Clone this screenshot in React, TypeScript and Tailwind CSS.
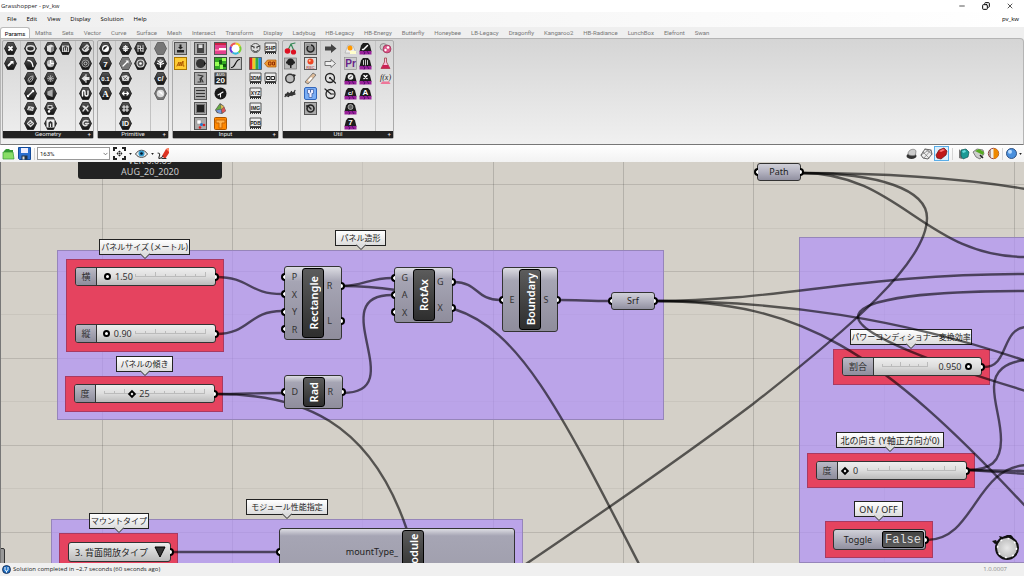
import type { ReactNode } from "react";
import clsx from "clsx";
import { Copy, Minus, X } from "lucide-react";

type Icon = { label: string; frame: "hex" | "pale" | "box" | "file" | "cap" | "none"; art: ReactNode };

const stroke = (d: string, color = "#fff", width = 1.4) => (
  <path d={d} fill="none" stroke={color} strokeWidth={width} strokeLinecap="round" strokeLinejoin="round" />
);

const letter = (text: string, size: number, color = "#fff", y = 10.5) => (
  <text x="7.5" y={y} textAnchor="middle" fontSize={size} fontWeight="bold" fill={color} fontFamily="Liberation Sans, sans-serif">
    {text}
  </text>
);

const hex = (label: string, art: ReactNode): Icon => ({ label, frame: "hex", art });
const box = (label: string, art: ReactNode): Icon => ({ label, frame: "box", art });
const file = (label: string, art: ReactNode): Icon => ({ label, frame: "file", art });
const cap = (label: string, art: ReactNode): Icon => ({ label, frame: "cap", art });
const plain = (label: string, art: ReactNode): Icon => ({ label, frame: "none", art });

const hexPoints = "4.5,1.5 10.5,1.5 13.5,7.5 10.5,13.5 4.5,13.5 1.5,7.5";

const groups: { name: string; sections: Icon[][][] }[] = [
  {
    name: "Geometry",
    sections: [
      [[
        hex("Point", stroke("M6 6l3 3M9 6l-3 3", "#fff", 1.8)),
        hex("Vector", <>{stroke("M5.5 9.5l3-3", "#fff", 1.8)}<path d="M7 5h3.500v3.500z" fill="#fff" /></>),
      ]],
      [[
        hex("Circle", <ellipse cx="7.500" cy="7.500" rx="4" ry="2.700" fill="none" stroke="#ddd" strokeWidth="1.500" />),
        hex("Circular Arc", stroke("M5 4.500c3 0 4.500 2 5 6")),
        hex("Curve", stroke("M5 10c0-3 2-5 5-5M6 11c3 0 4-2 4-5M6.500 9.500l2.500-3", "#ccc", 0.9)),
        hex("Line", <>{stroke("M5 10l5-5")}<circle cx="5" cy="10" r="1.200" fill="#fff" /><circle cx="10" cy="5" r="1.200" fill="#fff" /></>),
        hex("Plane", <><path d="M4 9l1.500-4 5.500 1-1 4z" fill="#ddd" />{stroke("M6 8.500l1.500-2 1.500 2", "#555", 0.7)}</>),
        hex("Rectangle", stroke("M7.500 4.500l3 3-3 3-3-3zM6 8.500l3-2", "#ddd", 1.2)),
      ]],
      [
        [
          hex("Box", <><path d="M4 5l4-1.500 3 1.500v4.500l-3.500 2L4 10z" fill="#ddd" /><path d="M8 6.500l3-1.500v4.500l-3 2z" fill="#888" /></>),
          hex("Brep", <><circle cx="7.500" cy="7.500" r="3.700" fill="#bbb" /><path d="M7.500 4v3.500h3.500M5 9h3" stroke="#fff" fill="none" /></>),
          hex("Mesh", <><circle cx="7.500" cy="7.500" r="3.500" fill="#555" />{stroke("M4.500 7.500h6M7.500 4.500v6M5.500 5.500l4 4M9.500 5.500l-4 4", "#bbb", 0.7)}</>),
          hex("Surface", <><path d="M4.500 5.500l5-2v7.500l-5-2z" fill="#ccc" />{stroke("M6 5v4M8 4.500v6", "#666", 0.6)}</>),
          hex("SubD", <>{stroke("M5 4.500h4v3h-4zM6 9.500l4-3", "#ccc", 1.1)}<circle cx="6" cy="10.500" r="1.200" fill="#fff" /></>),
          hex("Twisted Box", <><path d="M3.500 3.500h8v8h-8z" fill="#eee" /><path d="M5.500 11V6.500l2-1.500 2 1.500V11h-1.500V7.500H7V11z" fill="#333" /></>),
        ],
        [hex("Field", <><path d="M4 4.500h7v6.500H4z" fill="#ccc" />{stroke("M5.500 10V6.500l2-1 2 1V10M7.500 6v3", "#333", 0.9)}</>)],
      ],
      [[
        hex("Geometry", <>{stroke("M4.500 8c1 3 4 3 6 0M6 7l3-3 1.500 1.500L7.500 9", "#ddd", 1.5)}</>),
        hex("Geometry Cache", <><circle cx="7.500" cy="7.500" r="3.500" fill="none" stroke="#999" /><circle cx="7.500" cy="7.500" r="1.500" fill="none" stroke="#ccc" /></>),
        hex("Transform", <><path d="M7.500 4v2h4v3h-4v2L3.500 7.500z" fill="#ddd" />{stroke("M8 3.500v8", "#fff", 0.9)}</>),
        hex("Geometry Pipeline", stroke("M4.500 10V6c0-2 2.500-2 2.500 0v2.500c0 2 3 2 3 0V5")),
        hex("Group", stroke("M5 5l2 2.500-2 2.500M10 5L8 7.500l2 2.500M6.500 5.500l3 4", "#ddd", 1.3)),
        hex("Deform", stroke("M10 5c-3-1.500-5.500.500-5 3 .500 2 3 2 4 1M7.500 7.500h3", "#ddd", 1.6)),
      ]],
    ],
  },
  {
    name: "Primitive",
    sections: [
      [[
        hex("Boolean", <><circle cx="7.500" cy="7.500" r="3.500" fill="#fff" /><path d="M5.500 9.500a3 3 0 0 1 4-4z" fill="#222" /></>),
        hex("Integer", letter("7", 8)),
        hex("Number", letter("0.1", 6, "#fff", 9.5)),
        hex("Text", <text x="7.500" y="10.500" textAnchor="middle" fontSize="9" fontWeight="bold" fill="#fff" fontFamily="Liberation Serif, serif">A</text>),
      ]],
      [
        [
          hex("Complex", stroke("M5 7.500h5.500M7.500 4.500v6M6 5.500h3v4H6z", "#eee", 1.2)),
          hex("Colour", <><polygon points={hexPoints} fill="#777" />{stroke("M5 10l4-4", "#fff", 1.2)}<path d="M7.500 4.500h3v3z" fill="#fff" /></>),
          hex("Culture", <><path d="M3.500 5l5-1 3 2-1 4-6 0z" fill="#ddd" />{stroke("M5 6l4 3M6 9l3-3", "#555", 0.8)}</>),
          hex("Domain", stroke("M4.500 7.500h6M6 6l-1.500 1.500L6 9M9 6l1.500 1.500L9 9", "#fff", 1.2)),
          hex("Domain 2", stroke("M4.500 6h6M4.500 9h6M6 4.500v6M9 4.500v6", "#eee", 1.1)),
          hex("Guid", letter("ID", 7, "#fff", 10)),
        ],
        [
          hex("Matrix", stroke("M5 4.500v6M7.500 5v5M10 4.500v6M5 7.500h5M5 5h1.500M10 10h-1.500", "#ccc", 1)),
          hex("Time", <><circle cx="7.500" cy="7.500" r="3.500" fill="#555" stroke="#ddd" strokeWidth="1.200" /><circle cx="7.500" cy="7.500" r="1.300" fill="#fff" /></>),
        ],
      ],
      [[
        { label: "Data", frame: "pale", art: null },
        hex("Data Path", <>{stroke("M7.500 11V7M5 5l2.500 2L10 5M4.500 7.500l3 1 3-1", "#fff", 1.3)}<circle cx="7.500" cy="4.500" r="1.300" fill="#ccc" /></>),
        hex("File Path", letter("c/", 7, "#fff", 9.5)),
        { label: "Shader", frame: "pale", art: <><circle cx="7.500" cy="7.500" r="3.800" fill="#ddd" /><path d="M5 5.500a4 4 0 0 1 5 4z" fill="#fff" /></> },
      ]],
    ],
  },
  {
    name: "Input",
    sections: [
      [[
        box("Button", <><path d="M4 9h7v2.500H4z" fill="#222" /><path d="M6.500 3.500h2V6H10L7.500 8.500 5 6h1.500z" fill="#222" /></>),
        plain("Panel", <><rect x="1.500" y="1.500" width="12" height="12" fill="#fc3" stroke="#a70" />{stroke("M4 10l2-4v4l2-4v4l2-5v5h1", "#a50", 1)}</>),
      ]],
      [[
        box("Boolean Toggle", <><path d="M4 3h7v9H4z" fill="#444" /><path d="M5.500 3.500h4V7h-4z" fill="#ddd" /></>),
        box("Control Knob", <><circle cx="7.500" cy="7.500" r="4.500" fill="#333" /><path d="M11 5l2 2.500L11 10z" fill="#111" /></>),
        box("Digit Scroller", stroke("M5 4l5 1-3 3 1 3H5M8 7l2 4", "#333", 1.2)),
        box("MD Slider", stroke("M3.500 4.500h8M3.500 7.500h8M3.500 10.500h8", "#333", 1.2)),
        box("Number Slider", <rect x="3.500" y="3.500" width="8" height="8" fill="#222" stroke="#777" />),
        box("Value List", <><path d="M4 4h4v4H4z" fill="#fff" stroke="#888" strokeWidth=".5" /><circle cx="8.500" cy="8.500" r="1.500" fill="#27c" /><circle cx="11" cy="9" r="1.300" fill="#d22" /><circle cx="7" cy="11.500" r="1.300" fill="#d22" /></>),
      ]],
      [
        [
          box("Colour Picker", <><rect x="2" y="2" width="11" height="11" fill="#e3418d" /><path d="M2 8h11v2H2z" fill="#f7a" /><rect x="6" y="7" width="7" height="2" fill="#fff" /><path d="M2 2h11v2H2z" fill="#c24" /></>),
          plain("Image Sampler", <><rect x="1.500" y="1.500" width="12" height="12" fill="#3a2" stroke="#353" /><path d="M2 6h4v4H2zM9 2h4v3H9zM7 9h3v4H7z" fill="#9f5" /><path d="M6 4h3v4H6zM10 8h3v3h-3z" fill="#151" /></>),
          plain("Calendar", <><rect x="1.500" y="1.500" width="12" height="12" fill="#222" /><path d="M2 2h11v3.500H2z" fill="#555" />{letter("AUG", 4, "#ddd", 5)}{letter("20", 8, "#fff", 12)}</>),
          plain("Clock", <><circle cx="7.500" cy="7.500" r="6" fill="#1a1a1a" />{stroke("M5 9l2.500-1.500L10 6M7.500 7.500V11", "#fff", 1.1)}</>),
          plain("Gradient Mesh", <><path d="M2 9l5-7 4 3 2 5-4 3-5-1z" fill="#555" /><path d="M2.500 9l4.500-6 1 5z" fill="#6a4" /><path d="M7.500 3.500L11 5.500l-2.500 3z" fill="#db5" /><path d="M11 6l1.500 4-3 2-1-3z" fill="#d55" /><path d="M3 9.500l5-1 .500 4-3.500-1z" fill="#79d" /></>),
          plain("Import Table", <><rect x="1.500" y="1.500" width="12" height="12" rx="1" fill="#f80" stroke="#a50" /><path d="M3 4h9v3H9v5H6V7H3z" fill="#ffb24d" stroke="#c60" /></>),
        ],
        [
          plain("Colour Wheel", <><circle cx="7.500" cy="7.500" r="4.500" fill="#fff" /><g fill="none" strokeWidth="2"><path d="M7.500 2.500a5 5 0 0 1 4.500 3" stroke="#ec2" /><path d="M12 5.500a5 5 0 0 1-1.500 6" stroke="#7c3" /><path d="M10.500 11.500a5 5 0 0 1-6 0" stroke="#3bd" /><path d="M4.500 11.500a5 5 0 0 1-1.500-6" stroke="#63d" /><path d="M3 5.500a5 5 0 0 1 4.500-3" stroke="#e55" /></g></>),
          box("Graph Mapper", <><path d="M2.500 2.500h10v10h-10z" fill="#ccc" />{stroke("M3.500 11.500c4 0 4-8 8-8", "#111", 1.2)}</>),
        ],
      ],
      [
        [
          plain("Object Details", <><circle cx="7.500" cy="7" r="4.500" fill="#ddd" stroke="#555" />{stroke("M3 5l3 1M12 5L9 6M5 9.500c2 1.500 3 1.500 5 0M6 6v1M9 6v1", "#333", 1)}</>),
          plain("Colour Swatch", <g><path d="M1.500 1.500h3v12h-3z" fill="#d22" /><path d="M4.500 1.500h3v12h-3z" fill="#ec2" /><path d="M7.500 1.500h3v12h-3z" fill="#3a4" /><path d="M10.500 1.500h3v12h-3z" fill="#28d" /><path d="M1.500 1.500h12v12h-12z" fill="none" stroke="#333" strokeWidth=".6" /></g>),
          file("3DM File", letter("3DM", 5, "#222", 8.5)),
          file("XYZ File", letter("XYZ", 5, "#222", 8.5)),
          file("Image File", letter("IMG", 5, "#222", 8.5)),
          file("PDB File", letter("PDB", 5, "#222", 8.5)),
        ],
        [
          file("Shape File", letter("SHP", 5, "#222", 8.5)),
          plain("Atom Data", <><path d="M1.500 7.500l3-3.500h8.500v7H4.500z" fill="#e93" stroke="#a50" strokeWidth=".7" />{stroke("M6 6h2v3H6zM10 6h1.500v3H10z", "#820", 0.9)}</>),
          file("File Reader", stroke("M4 5.500h3v3H4zM8.500 5.500h3v3h-3z", "#222", 1)),
        ],
      ],
    ],
  },
  {
    name: "Util",
    sections: [
      [[
        plain("Cherry Picker", <>{stroke("M5 9l3-6 3 7M8 3l4-1", "#385", 1.2)}<circle cx="4.500" cy="10" r="2.800" fill="#d12" /><circle cx="10.500" cy="11" r="2.600" fill="#d12" /></>),
        plain("Param Viewer", <><rect x="1.500" y="2" width="12" height="11" fill="#bbb" stroke="#666" strokeWidth=".6" /><circle cx="7.500" cy="6" r="3.500" fill="#222" /><path d="M3 5.500h9v2H3zM7 8h1.500v4H7z" fill="#222" /></>),
        plain("Cluster Output", <><circle cx="7" cy="7.500" r="4.300" fill="#bbb" stroke="#333" strokeWidth="1.400" /><path d="M10 3l3 1-2 2z" fill="#222" /></>),
        plain("Scribble", stroke("M2 10.500l3-4 .500 4 3-5 .500 4 3-5M2.500 8.500l9-2M4 10l8-2", "#333", 1.3)),
      ]],
      [[
        box("Data Dam", <><circle cx="7.500" cy="7.500" r="3.500" fill="#888" stroke="#222" strokeWidth="1.500" /><path d="M3 3h5v2H3z" fill="#999" /></>),
        box("Data Recorder", <><rect x="2" y="2" width="11" height="11" fill="#ddd" /><circle cx="7.500" cy="5.500" r="3" fill="#e42" /><circle cx="6.700" cy="4.700" r="1" fill="#fc9" />{letter("REC", 4, "#b66", 12.5)}</>),
        plain("Relay", <><path d="M2 11l8-9 3 2-8 9z" fill="#db9" stroke="#666" strokeWidth=".8" /><path d="M5 9l3-3 1.500 1L6 11z" fill="#fff" /></>),
        plain("Trigger", <><rect x="1.500" y="1.500" width="12" height="12" rx="1.500" fill="#7aaef5" stroke="#36b" /><path d="M4.500 3.500h6v4H9v4H6v-4H4.500z" fill="#eef" stroke="#46a" strokeWidth=".8" /><path d="M7.500 3.500v3" stroke="#46a" /></>),
        box("Timer", <><circle cx="7.500" cy="7.500" r="3.500" fill="none" stroke="#222" strokeWidth="1.600" />{stroke("M5 5l3 3M3.500 5h2", "#222", 1.4)}</>),
      ]],
      [[
        plain("Input Arrow", <path d="M2 5.500h6V3l5.500 4.500L8 12V9.500H2z" fill="#444" />),
        plain("Output Arrow", <path d="M2 5.500h6V3.500l4.500 4L8 11.500V9.500H2z" fill="#eee" stroke="#555" strokeWidth=".8" />),
        plain("Find", <><circle cx="7" cy="7" r="4.500" fill="none" stroke="#222" strokeWidth="1.300" />{stroke("M7 7l5.500 5", "#222", 1.2)}<circle cx="7" cy="7" r="1" fill="#222" /></>),
        plain("Jump", <><circle cx="7.500" cy="8" r="4.500" fill="none" stroke="#222" strokeWidth="1.300" />{stroke("M2 3l6 5M8 8h2.500", "#222", 1.2)}</>),
      ]],
      [
        [
          plain("Fitness Landscape", <><path d="M2 12l3-8 5 1 3 7z" fill="#eee" stroke="#999" strokeWidth=".5" /><circle cx="7" cy="7" r="2.500" fill="#f90" /><path d="M7 10h6v3H7z" fill="#ffc" /></>),
          plain("Primitive", <><rect x="1.500" y="1.500" width="12" height="12" fill="#ccc" stroke="#888" strokeWidth=".6" />{letter("Pr", 10, "#628", 11)}</>),
          cap("Gauge", <><circle cx="7.500" cy="6" r="2.800" fill="#eee" />{stroke("M6.500 7l2-2", "#222", 1)}</>),
          cap("Path Genes", letter("c/", 6, "#fff", 8.5)),
          cap("Mesh Genes", <circle cx="7.500" cy="6" r="2.500" fill="#666" stroke="#ccc" strokeWidth=".7" />),
          cap("Integer Genes", letter("7", 8, "#fff", 9)),
        ],
        [
          cap("Line Genes", stroke("M6 8l3.500-3.500M4.500 8.500h1", "#fff", 1.5)),
          cap("List Genes", stroke("M5.500 4.500v4M7.500 4v5M9.500 4.500v4", "#ccc", 1)),
          cap("Point Genes", stroke("M6 4.500l3 3M9 4.500l-3 3", "#fff", 1.5)),
          cap("Text Genes", letter("A", 8, "#fff", 9)),
        ],
      ],
      [[
        plain("Galapagos", <><circle cx="5.500" cy="6" r="3.500" fill="#ccc" stroke="#666" strokeWidth=".6" /><circle cx="9" cy="8" r="4" fill="#d58" stroke="#824" strokeWidth=".6" /><circle cx="10" cy="6.500" r="1.300" fill="#fff" /><circle cx="7.500" cy="9" r="1.200" fill="#fff" /></>),
        plain("Solver", <><path d="M6.500 2h2v4l3.500 6.500H3L6.500 6z" fill="#fbd" stroke="#944" strokeWidth=".8" /><path d="M5 9h5l2 3.500H3z" fill="#c25" /></>),
        plain("Expression", <><text x="7.500" y="8.500" textAnchor="middle" fontSize="8" fontStyle="italic" fontFamily="Liberation Serif, serif" fill="#222">f(x)</text><path d="M4 10.500h7l1.500 2.500h-10z" fill="#e79" /></>),
      ]],
    ],
  },
];

const frames: Record<Icon["frame"], ReactNode> = {
  hex: <polygon points={hexPoints} fill="url(#dark)" stroke="#111" strokeWidth=".7" />,
  pale: <polygon points={hexPoints} fill="#777" stroke="#555" strokeWidth=".8" />,
  box: <rect x="1.500" y="1.500" width="12" height="12" fill="#aaa" stroke="#555" />,
  file: (
    <>
      <path d="M2 2h11v8.500H2z" fill="#eee" stroke="#444" strokeWidth=".9" />
      <path d="M2 10.500h11V13H2z" fill="#333" />
      <path d="M3 12.500h9" stroke="#eee" strokeDasharray="1 1" />
    </>
  ),
  cap: (
    <>
      <path d="M1.500 10.500l1.500-6 2-2.500h5l2 2.500 1.500 6z" fill="#1c1c1c" />
      <path d="M1.500 10h12v3.500h-12z" fill="#929" />
      <path d="M5 10l2 1.500-1 2M9 10l2 3" stroke="#406" fill="none" strokeWidth=".8" />
    </>
  ),
  none: null,
};

const menus = ["File", "Edit", "View", "Display", "Solution", "Help"];
const tabs = [
  "Params", "Maths", "Sets", "Vector", "Curve", "Surface", "Mesh", "Intersect", "Transform", "Display", "Ladybug",
  "HB-Legacy", "HB-Energy", "Butterfly", "Honeybee", "LB-Legacy", "Dragonfly", "Kangaroo2", "HB-Radiance",
  "LunchBox", "Elefront", "Swan",
];

function TitleBar() {
  return (
    <header className="flex h-3 shrink-0 items-center justify-between bg-white pl-px pr-[10px] text-[6px]">
      <h1>Grasshopper - pv_kw</h1>
      <div className="flex gap-4 text-black">
        <button aria-label="Minimize"><Minus className="size-2" strokeWidth={2} /></button>
        <button aria-label="Restore"><Copy className="size-2 -scale-x-100" strokeWidth={3} /></button>
        <button aria-label="Close"><X className="size-2" strokeWidth={2} /></button>
      </div>
    </header>
  );
}

function MenuBar() {
  return (
    <nav className="flex h-[15px] shrink-0 items-center bg-linear-to-r from-[#efefef] to-white pl-[7px] pr-[5px] text-[6px] text-black">
      <div className="flex flex-1 gap-[10px]">
        {menus.map((m) => <button key={m}>{m}</button>)}
      </div>
      <span>pv_kw</span>
    </nav>
  );
}

function Ribbon() {
  return (
    <section className="shrink-0 bg-[#efefef]">
      <div role="tablist" className="flex h-[11px] items-stretch font-[Roboto,sans-serif] text-[6px] text-[#777]">
        {tabs.map((t, i) => (
          <button
            key={t + i}
            role="tab"
            aria-selected={i === 0}
            className={clsx(
              "whitespace-nowrap",
              i === 0 ? "w-[30px] rounded-t-[3px] border border-b-0 border-[#bbb] bg-white text-black" : "px-[5px]",
            )}
          >
            {t}
          </button>
        ))}
      </div>
      <div className="flex h-[107px] items-start gap-[3px] rounded-tr-[4px] border border-b-[#777] border-[#b5b5b5] bg-linear-to-b from-[#d5d5d5] to-[#f0f0f0] pl-px pt-px">
        {groups.map((g) => (
          <div key={g.name} className="flex flex-col rounded-[2px] border border-[#aaa] bg-linear-to-b from-[#d5d5d5] to-[#eee]">
            <div className="flex h-[90px] divide-x divide-[#c2c2c2]">
              {g.sections.map((cols, s) => (
                <div key={s} className="flex pr-[2px] not-first:pl-[2px] last:pr-0">
                  {cols.map((col, c) => (
                    <div key={c} className="flex flex-col">
                      {col.map((icon) => (
                        <button key={icon.label} aria-label={icon.label} className="size-[15px]">
                          <svg viewBox="0 0 15 15" className="size-[15px]">
                            {frames[icon.frame]}
                            {icon.art}
                          </svg>
                        </button>
                      ))}
                    </div>
                  ))}
                </div>
              ))}
            </div>
            <div className="relative h-[7px] bg-[#222] text-center font-[Roboto,sans-serif] text-[6px] leading-[6px] text-[#eee]">
              {g.name}
              <span className="absolute right-[2px]">+</span>
            </div>
          </div>
        ))}
      </div>
    </section>
  );
}

function Caret() {
  return <svg viewBox="0 0 4 3" className="h-[2px] w-[3px]"><path d="M0 0h4L2 3z" fill="#222" /></svg>;
}

function Toolbar() {
  return (
    <div className="flex h-[17px] shrink-0 items-center bg-linear-to-b from-white to-[#f2f2f2] px-[2px]">
      <button aria-label="Open">
        <svg viewBox="0 0 13 13" className="size-[13px]">
          <path d="M2 4l2-2h3l1 1h3v8H2z" fill="#393" />
          <path d="M1 5h10l1 7H1z" fill="#8d6" stroke="#393" strokeWidth=".7" />
        </svg>
      </button>
      <button aria-label="Save" className="ml-[3px]">
        <svg viewBox="0 0 13 13" className="size-[13px]">
          <path d="M.5.5h12v12h-11l-1-1z" fill="#2b6fd0" stroke="#124a9a" />
          <path d="M3 1h7v5H3z" fill="#eef" />
          <path d="M3.500 8.500h6v4h-6z" fill="#234" />
          <path d="M4.500 9.500h2v3h-2z" fill="#ddd" />
        </svg>
      </button>
      <span className="ml-[3px] mr-[2px] h-3 w-px bg-[#d5d5d5]" />
      <div className="relative flex">
        <select aria-label="Zoom" className="h-[13px] w-[73px] appearance-none border border-[#999] bg-white pl-[2px] font-[Roboto,sans-serif] text-[6px]">
          <option>163%</option>
        </select>
        <svg viewBox="0 0 6 4" className="pointer-events-none absolute right-[2px] top-[5px] h-[4px] w-[5px]">
          {stroke("M1 1l2 2 2-2", "#555", 0.9)}
        </svg>
      </div>
      <button aria-label="Zoom extents" className="ml-[3px] flex items-center gap-[3px]">
        <svg viewBox="0 0 13 13" className="size-[13px]">
          <path d="M1 4V1h3M9 1h3v3M12 9v3H9M4 12H1V9" fill="none" stroke="#222" strokeWidth="2" />
          <path d="M6.500 3.500l1.500 1.500h-3zM6.500 9.500L5 8h3zM3.500 6.500L5 5v3zM9.500 6.500L8 8V5zM5.500 5.500h2v2h-2z" fill="#222" />
        </svg>
        <Caret />
      </button>
      <button aria-label="Named views" className="ml-[3px] flex items-center gap-[3px]">
        <svg viewBox="0 0 13 13" className="size-[13px]">
          <path d="M.5 7c3-5 9-5 12 0-3 4.500-9 4.500-12 0z" fill="#eee" stroke="#333" strokeWidth=".9" />
          <circle cx="6.500" cy="6.500" r="3" fill="#39c" />
          <circle cx="6.500" cy="6.500" r="1.300" fill="#012" />
        </svg>
        <Caret />
      </button>
      <button aria-label="Sketch" className="ml-[3px]">
        <svg viewBox="0 0 13 13" className="size-[13px]">
          <path d="M5 9l4-7 3-1v5l-4 6z" fill="#d32" />
          <path d="M9 2l3-1v4z" fill="#f86" />
          {stroke("M1 6c2 0 2 2 1 4s2 2 4-1M5 11.500h4", "#333", 1.1)}
        </svg>
      </button>
      <div className="ml-auto flex items-center">
        <button aria-label="No preview" className="px-px">
          <svg viewBox="0 0 13 13" className="size-[13px]">
            <ellipse cx="6.500" cy="9" rx="5" ry="3" fill="#333" />
            <path d="M3 7c0-5 7-6 8-3l-.500 4c-2 1-6 1-7.500-1z" fill="#ccc" stroke="#777" strokeWidth=".7" />
          </svg>
        </button>
        <button aria-label="Wireframe preview" className="px-px">
          <svg viewBox="0 0 13 13" className="size-[13px]">
            <path d="M1 8l4-6 6 1 1 4-4 5-5-1z" fill="#eee" stroke="#555" strokeWidth=".9" />
            {stroke("M3 5l6 6M5 2l7 5M1 8l8-5M4 11l7-8", "#666", 0.6)}
          </svg>
        </button>
        <button aria-label="Shaded preview" className="border border-[#5aaee8] bg-[#dceefb]">
          <svg viewBox="0 0 13 13" className="size-[13px]">
            <path d="M1 8l3-5 5-2 3 3-1 4-5 4-4-1z" fill="#c01818" stroke="#611" strokeWidth=".7" />
            <path d="M4 4l4-2 2 1-4 2z" fill="#f77" />
          </svg>
        </button>
        <span className="mx-[3px] h-3 w-px bg-[#d5d5d5]" />
        <button aria-label="Selected only" className="px-px">
          <svg viewBox="0 0 13 13" className="size-[13px]">
            <path d="M2 2l3 4v6l-3-1z" fill="#777" />
            <path d="M4 3l5-1 3 3-1 5-5 2-2-3z" fill="#1a9a95" stroke="#155" strokeWidth=".7" />
            <path d="M5 4l3-1 1 2-3 1z" fill="#6dd" />
          </svg>
        </button>
        <button aria-label="Document preview" className="px-px">
          <svg viewBox="0 0 13 13" className="size-[13px]">
            <path d="M1 5l4-3 6 1 1 4-4 5-4-2z" fill="#ccc" stroke="#555" strokeWidth=".7" />
            <path d="M3 4l4-2 5 3-1 3-4-2z" fill="#5a2" />
            <path d="M8 8l3 3" stroke="#222" strokeWidth="1.500" />
          </svg>
        </button>
        <button aria-label="Mesh quality" className="px-px">
          <svg viewBox="0 0 13 13" className="size-[13px]">
            <circle cx="6.500" cy="6.500" r="5.200" fill="#eee" stroke="#833" strokeWidth=".9" />
            <path d="M6.500 1.300a5.200 5.200 0 0 1 0 10.400z" fill="#e80" />
            <path d="M3 3v7" stroke="#644" />
          </svg>
        </button>
        <span className="mx-px h-3 w-px bg-[#d5d5d5]" />
        <button aria-label="Preview settings" className="flex items-center gap-px pl-px">
          <svg viewBox="0 0 13 13" className="size-[13px]">
            <circle cx="6.500" cy="6.500" r="5" fill="#4a90dd" stroke="#247" strokeWidth=".9" />
            <circle cx="5" cy="4.800" r="2" fill="#bdf" />
          </svg>
          <Caret />
        </button>
      </div>
    </div>
  );
}

const gridX = [102, 232, 362, 493, 623, 753, 884, 1014];
const gridY = [22, 66, 109, 152, 196, 239, 283, 326, 370];

// Wire end points use the same origin as the canvas.
const wires = [
  "M216 115C250 115 248 132 282 132",
  "M216 172C250 172 248 149 282 149",
  "M216 232C240 232 258 231 282 231",
  "M216 232C300 232 370 258 407 368",
  "M343 124C362 124 370 116 392 116",
  "M343 124C362 124 375 125 396 128",
  "M343 231C412 231 322 133 392 133",
  "M454 120C478 120 476 138 500 138",
  "M454 147C520 168 560 248 640 404",
  "M560 138C575 138 592 139 609 139",
  "M172 390H278",
  "M656 139C780 139 860 112 1026 112",
  "M656 139C780 139 900 156 1026 199",
  "M656 139C800 139 880 188 1026 345",
  "M802 11C880 11 960 16 1026 27",
  "M802 11C900 11 925 95 1026 95",
  "M802 11C880 11 927 28 927 56C927 100 850 166 753 242C700 282 600 352 520 406",
  "M1026 129C940 129 858 135 858 155C858 173 940 203 1026 229",
  "M984 205C1010 205 1000 165 1028 165",
  "M968 308C990 308 1001 300 1001 278C1001 258 994 243 994 225C994 210 1005 199 1028 198",
  "M968 308L1028 309",
  "M968 308L1028 312",
  "M927 378C975 378 975 304 1028 303",
];

function Port({ side }: { side: "in" | "out" }) {
  return (
    <i
      className={clsx(
        "absolute top-1/2 h-[8px] w-[4px] -translate-y-1/2 border-2 border-black bg-white",
        side === "in" ? "-left-[4px] rounded-l-full border-r-0" : "-right-[4px] rounded-r-full border-l-0",
      )}
    />
  );
}

type ComponentProps = { at: string; title: string; ins: string[]; outs: string[] };

function Component({ at, title, ins, outs }: ComponentProps) {
  return (
    <div
      className={clsx(
        "absolute flex rounded-[3px] border border-[#333] bg-linear-to-b from-[#dddde3] via-[#a6a5b4] via-20% to-[#8f8d9c] text-[9px] text-[#333]",
        at,
      )}
    >
      <ul className="flex flex-1 flex-col py-px">
        {ins.map((p) => <li key={p} className="relative flex flex-1 items-center justify-center pl-[2px]">{p}<Port side="in" /></li>)}
      </ul>
      <div className="my-px flex w-[22px] items-center justify-center rounded-[3px] border border-black bg-linear-to-b from-[#5c5c5c] to-[#2e2e2e] text-[11px] font-semibold leading-none text-white">
        <span className="rotate-180 [writing-mode:vertical-rl]">{title}</span>
      </div>
      <ul className="flex flex-1 flex-col py-px">
        {outs.map((p) => <li key={p} className="relative flex flex-1 items-center justify-center pr-[6px]">{p}<Port side="out" /></li>)}
      </ul>
    </div>
  );
}

function Param({ at, children }: { at: string; children: ReactNode }) {
  return (
    <div className={clsx("absolute flex h-[18px] w-[44px] items-center justify-center rounded-[3px] border border-[#333] bg-linear-to-b from-[#d0d0d8] via-[#b3b2c0] to-[#9190a0] text-[9px] text-[#222]", at)}>
      {children}
      <Port side="in" />
      <Port side="out" />
    </div>
  );
}

type SliderProps = {
  at: string;
  name: string;
  value: number;
  max: number;
  digits: number;
  ticks: number[];
  wide?: boolean;
  flip?: boolean;
};

function Slider({ at, name, value, max, digits, ticks, wide, flip }: SliderProps) {
  const ratio = value / max;
  const end = ticks[ticks.length - 1];
  const valueStyle = flip
    ? { right: `calc(15px + ${1 - ratio} * (100% - 16px))` }
    : { left: `calc(15px + ${ratio} * (100% - 16px))` };
  return (
    <label className={clsx("absolute flex h-[19px] rounded-[3px] border border-[#333] bg-linear-to-b from-[#eee] via-[#ddd] to-[#bbb] text-[9px] text-[#333]", at)}>
      <span
        className={clsx(
          "flex items-center justify-center rounded-l-[2px] border-r border-[#333] bg-linear-to-b from-[#bbbac6] to-[#8e8d9c]",
          wide ? "w-[31px]" : "w-[21px]",
        )}
      >
        {name}
      </span>
      <span className="relative flex flex-1 items-center">
        <svg className="absolute inset-0 size-full">
          <path
            d={`M${ticks[0]} 8.500H${end + 1}` + ticks.map((x, i) => `M${x + 0.5} 8V${i % 5 === 2 || x === end ? 4 : 6}`).join("")}
            stroke="#bbb"
          />
        </svg>
        <input
          type="range"
          min={0}
          max={max}
          step={10 ** -digits}
          defaultValue={value}
          className={clsx(
            "relative mx-1 h-2 w-full min-w-0 flex-1 appearance-none bg-transparent [&::-webkit-slider-thumb]:appearance-none [&::-webkit-slider-thumb]:border-2 [&::-webkit-slider-thumb]:border-black [&::-webkit-slider-thumb]:bg-white",
            digits
              ? "[&::-webkit-slider-thumb]:size-[7px] [&::-webkit-slider-thumb]:rounded-full"
              : "[&::-webkit-slider-thumb]:size-[6px] [&::-webkit-slider-thumb]:rotate-45",
          )}
        />
        <output className="absolute" style={valueStyle}>{value.toFixed(digits)}</output>
      </span>
      <Port side="out" />
    </label>
  );
}

function Scribble({ at, children }: { at: string; children: ReactNode }) {
  return (
    <div className={clsx("absolute flex h-4 items-center justify-center whitespace-nowrap border border-[#222] bg-linear-to-b from-white to-[#ddd] leading-none text-[#222]", at)}>
      {children}
      <svg viewBox="0 0 10 6" className="absolute left-1/2 top-full -mt-px h-[6px] w-[10px] -translate-x-1/2">
        <path d="M0 0H10V1L5 5.500L0 1z" fill="#ddd" />
        <path d="M0 .5L5 5.500L10 .5" fill="none" stroke="#222" />
      </svg>
    </div>
  );
}

function Canvas() {
  const violet = "absolute border border-[#9685ba] bg-[#b091f6]/70";
  const red = "absolute border border-[#a83a62] bg-[#e5435f]";
  return (
    <main className="relative min-h-0 flex-1 overflow-hidden border-l border-[#777] bg-[#d4d0c8] font-['Noto_Sans','Noto_Sans_CJK_JP',sans-serif]">
      <svg className="absolute -left-px top-0 h-full w-[calc(100%+1px)] stroke-black">
        {gridX.map((x, i) => <line key={x} x1={x + 0.5} x2={x + 0.5} y1="0" y2="100%" strokeOpacity={i % 4 === 2 ? 0.06 : 0.15} />)}
        {gridY.map((y, i) => <line key={y} x1="0" x2="100%" y1={y + 0.5} y2={y + 0.5} strokeOpacity={i % 2 ? 0.05 : 0.12} />)}
      </svg>

      <div className={clsx(violet, "left-[56px] top-[88px] h-[170px] w-[607px]")} />
      <div className={clsx(violet, "left-[50px] top-[357px] h-[60px] w-[472px]")} />
      <div className={clsx(violet, "-right-px bottom-0 left-[798px] top-[75px]")} />
      <div className={clsx(red, "left-[65px] top-[97px] h-[93px] w-[158px]")} />
      <div className={clsx(red, "left-[64px] top-[214px] h-[36px] w-[158px]")} />
      <div className={clsx(red, "left-[58px] top-[371px] h-[50px] w-[119px]")} />
      <div className={clsx(red, "left-[832px] top-[187px] h-[36px] w-[157px]")} />
      <div className={clsx(red, "left-[806px] top-[291px] h-[35px] w-[168px]")} />
      <div className={clsx(red, "left-[824px] top-[359px] h-[37px] w-[108px]")} />

      <Scribble at="left-[98px] top-[77px] w-[91px] text-[8px]">パネルサイズ (メートル)</Scribble>
      <Scribble at="left-[115px] top-[194px] w-[57px] text-[8px]">パネルの傾き</Scribble>
      <Scribble at="left-[334px] top-[68px] w-[51px] text-[8px]">パネル造形</Scribble>
      <Scribble at="left-[245px] top-[337px] w-[82px] text-[8px]">モジュール性能指定</Scribble>
      <Scribble at="left-[88px] top-[351px] w-[60px] text-[8px]">マウントタイプ</Scribble>
      <Scribble at="left-[849px] top-[167px] w-[122px] text-[8px]">パワーコンディショナー変換効率</Scribble>
      <Scribble at="left-[835px] top-[270px] w-[108px] text-[9px]">北の向き (Y軸正方向が0)</Scribble>
      <Scribble at="left-[853px] top-[339px] w-[49px] text-[9px]">ON / OFF</Scribble>

      <svg className="absolute -left-px top-0 h-full w-[calc(100%+1px)] fill-none stroke-black/60" strokeWidth="2.400">
        {wires.map((d) => <path key={d} d={d} />)}
      </svg>

      <div className="absolute -top-[7px] left-[77px] w-[144px] rounded-[3px] bg-[#222] pb-[2px] text-center text-[9px] leading-[11px] text-[#ccc]">
        <p>VER 0.0.69</p>
        <p>AUG_20_2020</p>
      </div>

      <Slider at="left-[74px] top-[105px] w-[141px]" name="横" value={1.5} max={50} digits={2} ticks={[38, 48, 58, 68, 78, 88, 98, 108]} />
      <Slider at="left-[74px] top-[162px] w-[141px]" name="縦" value={0.9} max={50} digits={2} ticks={[38, 48, 58, 68, 78, 88, 98, 108]} />
      <Slider at="left-[73px] top-[222px] w-[141px]" name="度" value={25} max={90} digits={0} ticks={[8, 18, 28, 58, 68, 78, 88, 98, 108]} />
      <Slider at="left-[841px] top-[195px] w-[140px]" name="割合" value={0.95} max={1} digits={3} ticks={[8, 17, 26, 35, 44, 53]} wide flip />
      <Slider at="left-[815px] top-[299px] w-[151px]" name="度" value={0} max={90} digits={0} ticks={[29, 40, 51, 62, 73, 84, 95, 106, 117]} />

      <Component at="left-[283px] top-[104px] h-[74px] w-[58px]" title="Rectangle" ins={["P", "X", "Y", "R"]} outs={["R", "L"]} />
      <Component at="left-[393px] top-[105px] h-[56px] w-[59px]" title="RotAx" ins={["G", "A", "X"]} outs={["G", "X"]} />
      <Component at="left-[501px] top-[105px] h-[65px] w-[56px]" title="Boundary" ins={["E"]} outs={["S"]} />
      <Component at="left-[283px] top-[213px] h-[34px] w-[59px]" title="Rad" ins={["D"]} outs={["R"]} />

      <div className="absolute left-[278px] top-[366px] flex h-12 w-[236px] rounded-[3px] border border-[#333] bg-linear-to-b from-[#dddde3] via-[#a6a5b4] via-15% to-[#9f9eac] text-[9px] text-[#222]">
        <div className="relative flex h-full w-[122px] items-center justify-end pr-1">mountType_<Port side="in" /></div>
        <div className="mt-px flex w-[22px] justify-center rounded-t-[3px] border border-black bg-linear-to-b from-[#5c5c5c] to-[#2e2e2e] pt-1 text-[11px] font-semibold leading-none text-white">
          <span className="rotate-180 [writing-mode:vertical-rl]">Module</span>
        </div>
      </div>

      <Param at="left-[610px] top-[130px]">Srf</Param>
      <Param at="left-[756px] top-[1px]">Path</Param>

      <div className="absolute left-[832px] top-[367px] flex h-[21px] w-[93px] items-center rounded-[3px] border border-[#333] bg-linear-to-b from-[#d0d0d8] to-[#9190a0] pr-px text-[9px] text-[#222]">
        <span className="flex-1 text-center">Toggle</span>
        <button className="h-[17px] w-[42px] rounded-[2px] border border-black bg-linear-to-b from-[#444] to-[#5c5c5c] font-['Liberation_Mono',monospace] text-[12px] leading-none text-[#ddd]">
          False
        </button>
        <Port side="out" />
      </div>

      <div className="absolute left-[67px] top-[380px] flex h-5 w-[103px] rounded-[3px] border border-[#333] bg-linear-to-b from-[#eee] to-[#bbb]">
        <select aria-label="マウントタイプ" className="w-full appearance-none bg-transparent pl-[6px] text-[9px] leading-none text-[#222]">
          <option>3. 背面開放タイプ</option>
        </select>
        <svg viewBox="0 0 12 12" className="pointer-events-none absolute right-1 top-[3px] size-3">
          <path d="M1 1h10L6 11z" fill="#333" stroke="#000" />
        </svg>
        <Port side="out" />
      </div>

      <div className="absolute -left-1 top-[386px] h-5 w-2 rounded-[2px] border border-[#333] bg-[#999]" />

      <svg viewBox="0 0 28 28" className="absolute bottom-[2px] right-1 size-7">
        <path d="M0 8l4-1 1 2 3-4-1-2 4 1 4-2 4 0 2 2 1 3 3 1-2 2H7L3 11z" fill="#111" />
        <circle cx="15" cy="15" r="11" fill="url(#ball)" stroke="#111" strokeWidth="2" />
        <circle cx="15" cy="15" r="9.500" fill="none" stroke="#fff" strokeWidth="1.500" strokeDasharray="2 5.500" />
      </svg>
    </main>
  );
}

export default function App() {
  return (
    <div className="flex h-screen flex-col overflow-hidden bg-white font-['Open_Sans','Noto_Sans_CJK_JP',sans-serif] text-[#222]">
      <svg className="absolute size-0">
        <defs>
          <linearGradient id="dark" x1="0" y1="0" x2="0" y2="1">
            <stop offset="0" stopColor="#555" />
            <stop offset="1" stopColor="#111" />
          </linearGradient>
          <radialGradient id="ball">
            <stop offset="0" stopColor="#e8e8e8" />
            <stop offset="1" stopColor="#bbb" />
          </radialGradient>
        </defs>
      </svg>
      <TitleBar />
      <MenuBar />
      <Ribbon />
      <Toolbar />
      <Canvas />
      <footer className="flex h-[13px] shrink-0 items-center gap-[2px] bg-[#f0f0f0] pl-[2px] pr-[17px] text-[6px]">
        <svg viewBox="0 0 9 9" className="size-[9px]">
          <circle cx="4.500" cy="4.500" r="4" fill="#1c6fc4" stroke="#124" strokeWidth=".8" />
          <path d="M3 2v2.500a1.500 1.500 0 0 0 3 0V2M4.500 6v1.500" stroke="#fff" fill="none" />
        </svg>
        <span className="flex-1">Solution completed in ~2.7 seconds (60 seconds ago)</span>
        <span className="text-[#888]">1.0.0007</span>
      </footer>
    </div>
  );
}
